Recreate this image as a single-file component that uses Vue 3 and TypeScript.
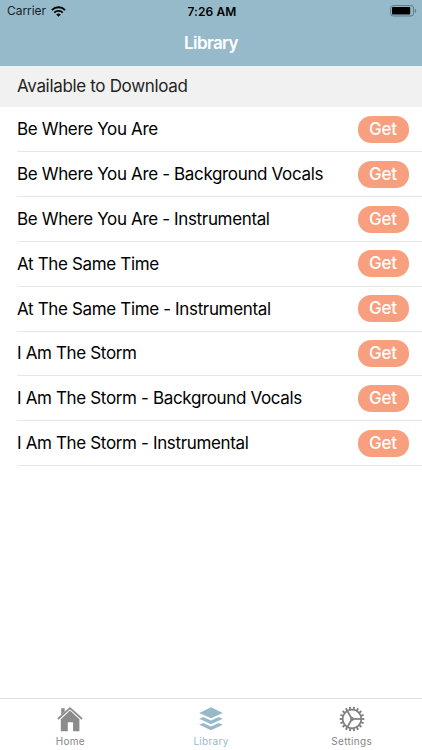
<script setup lang="ts">
interface Track {
  id: number
  title: string
}

const tracks: Track[] = [
  'Be Where You Are',
  'Be Where You Are - Background Vocals',
  'Be Where You Are - Instrumental',
  'At The Same Time',
  'At The Same Time - Instrumental',
  'I Am The Storm',
  'I Am The Storm - Background Vocals',
  'I Am The Storm - Instrumental',
].map((title, id) => ({ id, title }))

const teeth: number[] = Array.from({ length: 18 }, (_, i) => i * 20)
const spokes: number[] = [0, 120, 240]
</script>

<template>
  <div class="screen">
    <header class="top">
      <div class="status">
        <div class="carrier">
          <span>Carrier</span>
          <svg class="wifi" viewBox="0 0 15 11" width="15" height="11">
            <path d="M.9 4.1a9.3 9.3 0 0 1 13.2 0" fill="none" stroke="#000" stroke-width="2" />
            <path d="M3.3 6.7a5.9 5.9 0 0 1 8.4 0" fill="none" stroke="#000" stroke-width="1.8" />
            <path d="M7.5 10.8L5.2 8.5a3.3 3.3 0 0 1 4.6 0z" fill="#000" />
          </svg>
        </div>
        <span class="time">7:26 AM</span>
        <svg class="battery" viewBox="0 0 27 12" width="27" height="12">
          <rect x=".6" y=".6" width="23" height="10.4" rx="2.6" fill="none" stroke="#5d7985" stroke-width="1" />
          <rect x="2" y="2" width="18.2" height="7.6" rx=".8" fill="#000" />
          <path d="M25 3.9c1.8.7 1.8 3.1 0 3.8z" fill="#5d7985" />
        </svg>
      </div>
      <h1>Library</h1>
    </header>

    <main>
      <h2>Available to Download</h2>
      <ul>
        <li v-for="track in tracks" :key="track.id">
          <span class="title">{{ track.title }}</span>
          <button type="button">Get</button>
        </li>
      </ul>
    </main>

    <nav>
      <a class="tab">
        <svg viewBox="0 0 26 26" width="26" height="26">
          <path d="M4.2 2.3h3.5v3.2L4.2 9z" fill="#8b8b8b" />
          <path d="M.9 13L13 2.1 25.1 13" fill="none" stroke="#8b8b8b" stroke-width="1.7" />
          <path d="M13 4.6l9.4 8.6v12h-6.3v-8.9h-5.3v8.9H3.8v-12z" fill="#8b8b8b" />
        </svg>
        <span>Home</span>
      </a>
      <a class="tab active">
        <svg viewBox="0 0 26 26" width="26" height="26">
          <path d="M13 1.3l11.8 5.7L13 12.3 1.2 7z" />
          <path d="M1.2 12.8l4-1.9 7.8 3.6 7.8-3.6 4 1.9L13 18.2z" />
          <path d="M1.2 18.8l4-1.9 7.8 3.6 7.8-3.6 4 1.9L13 24.2z" />
        </svg>
        <span>Library</span>
      </a>
      <a class="tab">
        <svg viewBox="0 0 26 26" width="26" height="26">
          <g fill="none" stroke="#808080">
            <circle cx="13" cy="13" r="9.3" stroke-width="1.7" />
            <path v-for="a in teeth" :key="a" d="M22.3 13h3" stroke-width="1.9" :transform="`rotate(${a} 13 13)`" />
            <path v-for="a in spokes" :key="`s${a}`" d="M13 13h9" stroke-width="1.7" :transform="`rotate(${a} 13 13)`" />
          </g>
          <circle cx="13" cy="13" r="1.9" fill="#808080" />
        </svg>
        <span>Settings</span>
      </a>
    </nav>
  </div>
</template>

<style>
body {
  margin: 0;
  background: #fff;
}
</style>

<style scoped>
.screen {
  display: flex;
  flex-direction: column;
  width: 422px;
  height: 750px;
  overflow: hidden;
  box-sizing: border-box;
  background: #fff;
  font-family: Inter, "Liberation Sans", sans-serif;
  color: #000;
}
.top {
  height: 65.5px;
  flex: none;
  background: #97bacb;
}
.status {
  display: grid;
  grid-template-columns: 1fr auto 1fr;
  align-items: center;
  height: 22px;
  padding: 0 5px 0 7px;
  font-size: 12px;
}
.carrier {
  display: flex;
  align-items: center;
  gap: 4px;
  color: #17232a;
  letter-spacing: -0.05px;
}
.carrier .wifi {
  margin-left: 1px;
}
.carrier,
.battery {
  line-height: 14px;
}
.time {
  font-weight: 600;
  letter-spacing: 0.1px;
}
.battery {
  justify-self: end;
}
h1 {
  margin: 0;
  text-align: center;
  font-size: 17px;
  line-height: 43px;
  font-weight: 600;
  letter-spacing: -0.6px;
  color: #fff;
}
h2 {
  margin: 0;
  height: 41.5px;
  padding-left: 17px;
  line-height: 41px;
  font-size: 17px;
  font-weight: 400;
  letter-spacing: -0.33px;
  background: #f1f1f1;
  color: #242424;
}
ul {
  margin: 0;
  padding: 0.6px 0 0 17px;
  list-style: none;
}
li {
  display: flex;
  align-items: center;
  justify-content: space-between;
  box-sizing: border-box;
  height: 44.8px;
  padding-right: 13.5px;
  border-bottom: 1px solid #e6e6e7;
}
.title {
  font-size: 17px;
  line-height: 22px;
  letter-spacing: -0.35px;
  white-space: nowrap;
}
button {
  width: 51px;
  height: 27px;
  padding: 0;
  border: 0;
  border-radius: 13px;
  background: #f79f7e;
  color: #fff;
  font: 500 17px/27px Inter, "Liberation Sans", sans-serif;
  letter-spacing: -0.2px;
}
nav {
  display: grid;
  grid-template-columns: repeat(3, 1fr);
  height: 52px;
  box-sizing: border-box;
  margin-top: auto;
  border-top: 1px solid #dedede;
}
.tab {
  display: flex;
  flex-direction: column;
  align-items: center;
  padding-top: 7px;
  gap: 2px;
  color: #858585;
  font-size: 10px;
  line-height: 14px;
  font-weight: 400;
  letter-spacing: 0.3px;
}
.active {
  color: #97bacb;
  fill: #97bacb;
}
</style>
